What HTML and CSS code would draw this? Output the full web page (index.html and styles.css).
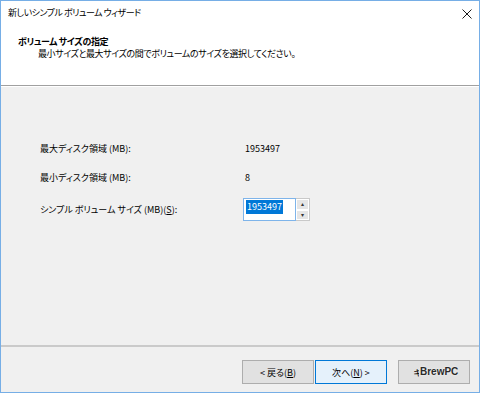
FILE: index.html
```html
<!DOCTYPE html>
<html lang="ja">
<head>
    <meta charset="UTF-8">
    <meta name="viewport" content="width=device-width, initial-scale=1.0">
    <title>新しいシンプル ボリューム ウィザード</title>
    <link rel="stylesheet" href="styles.css">
</head>
<body>
    <div class="wizard">
        <div class="top">
            <div class="titlebar">
                <span class="title">新しいシンプル ボリューム ウィザード</span>
                <svg class="close" width="10" height="10" viewBox="0 0 10 10">
                    <path d="M0.5 0.5 L9.5 9.5 M9.5 0.5 L0.5 9.5" stroke="#1a1a1a" stroke-width="1" fill="none"/>
                </svg>
            </div>
            <div class="header">
                <h1 class="header-title">ボリューム サイズの指定</h1>
                <p class="header-sub">最小サイズと最大サイズの間でボリュームのサイズを選択してください。</p>
            </div>
        </div>

        <div class="content">
            <div class="fields">
                <span class="label">最大ディスク領域 (MB):</span>
                <span class="value">1953497</span>

                <span class="label">最小ディスク領域 (MB):</span>
                <span class="value">8</span>

                <span class="label label-mid">シンプル ボリューム サイズ (MB)(<u>S</u>):</span>
                <div class="spin">
                    <div class="spin-input"><span class="selected">1953497</span></div>
                    <div class="spin-btns">
                        <span class="spin-btn">&#9652;</span>
                        <span class="spin-btn">&#9662;</span>
                    </div>
                </div>
            </div>
        </div>

        <div class="footer">
            <div class="nav-pair">
                <button class="btn">&lt; 戻る(<u>B</u>)</button>
                <button class="btn btn-default">次へ(<u>N</u>) &gt;</button>
            </div>
            <button class="btn btn-cancel">キャンセル<span class="watermark">BrewPC</span></button>
        </div>
    </div>
</body>
</html>
```

FILE: styles.css
```css
* {
    margin: 0;
    padding: 0;
    box-sizing: border-box;
}

body {
    font-family: "Noto Sans CJK JP", "Noto Sans", sans-serif;
    font-size: 9px;
    font-feature-settings: "palt";
    color: #000;
    background: #fff;
}

.wizard {
    width: 480px;
    height: 393px;
    border: 1px solid #76aee6;
    display: flex;
    flex-direction: column;
    background: #f0f0f0;
}

/* white title + header area */
.top {
    background: #fff;
    border-bottom: 1px solid #a0a0a0;
}

.titlebar {
    height: 24px;
    display: flex;
    align-items: center;
    justify-content: space-between;
    padding: 0 7px 0 7px;
}

.title {
    line-height: 12px;
    letter-spacing: -0.5px;
}

.close {
    margin-top: 1px;
}

.header {
    padding: 11px 0 25px 17px;
    line-height: 12px;
    letter-spacing: -0.4px;
}

.header-title {
    font-size: 9px;
    font-weight: 700;
}

.header-sub {
    padding-left: 20px;
}

/* body */
.content {
    flex: 1;
    border-top: 1px solid #fff;
    padding: 56px 0 0 39px;
}

.fields {
    display: grid;
    grid-template-columns: 203px auto;
    grid-template-rows: 29px 26px 23px;
    line-height: 12px;
}

.value {
    padding-left: 2px;
}

.label-mid {
    align-self: center;
}

.spin {
    display: flex;
    height: 23px;
}

.spin-input {
    width: 53px;
    border: 1px solid #7eb4ea;
    background: #fff;
    padding: 1px 0 0 2px;
}

.selected {
    display: inline-block;
    background: #0078d7;
    color: #fff;
    padding: 1px 1px;
    line-height: 12px;
}

.spin-btns {
    width: 14px;
    display: flex;
    flex-direction: column;
    border: 1px solid #c9c9c9;
    border-left: none;
    background: #fff;
}

.spin-btn {
    flex: 1;
    display: flex;
    align-items: center;
    justify-content: center;
    background: #e5e5e5;
    border: 1px solid #fff;
    font-size: 6px;
    line-height: 1;
    color: #333;
}

/* buttons */
.footer {
    height: 47px;
    border-top: 2px solid #cacaca;
    display: flex;
    justify-content: flex-end;
    padding: 13px 9px 0 0;
    gap: 11px;
}

.nav-pair {
    display: flex;
    gap: 1px;
}

.btn {
    width: 72px;
    height: 24px;
    font: inherit;
    font-size: 9px;
    background: #e1e1e1;
    border: 1px solid #adadad;
    color: #000;
}

.btn-default {
    background: #e5f1fb;
    border-color: #0078d7;
}

.btn-cancel {
    position: relative;
}

.watermark {
    position: absolute;
    left: 20px;
    top: 5px;
    padding: 0 1px;
    font-family: "Liberation Sans", Arial, sans-serif;
    font-size: 10px;
    font-weight: 700;
    color: #2a2a2a;
    background: #e1e1e1;
    text-shadow: 0 0 2px #fff;
    line-height: 12px;
}
```
